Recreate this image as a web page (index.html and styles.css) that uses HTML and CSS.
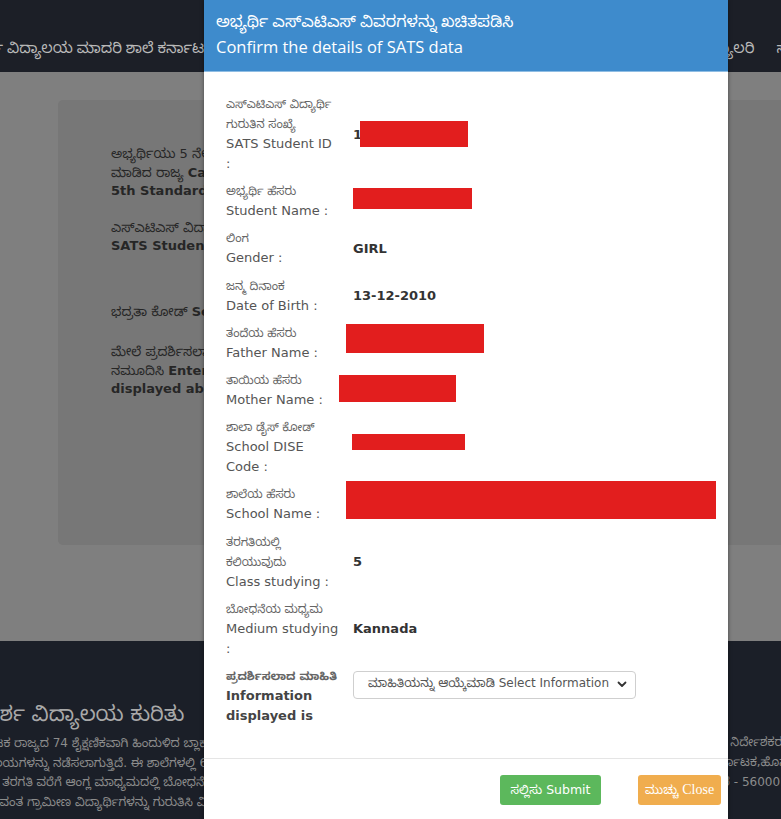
FILE: index.html
```html
<!DOCTYPE html>
<html lang="kn">
<head>
<meta charset="utf-8">
<title>SATS</title>
<link rel="stylesheet" href="styles.css">
</head>
<body>
<div class="page">
  <header class="nav">
    <div class="brand">ಆದರ್ಶ ವಿದ್ಯಾಲಯ ಮಾದರಿ ಶಾಲೆ ಕರ್ನಾಟಕ</div>
    <nav class="links">
      <span>ಮುಖಪುಟ</span>
      <span>ಗ್ಯಾಲರಿ</span>
      <span>ಸಂಪರ್ಕಿಸಿ</span>
    </nav>
  </header>
  <main class="main">
    <section class="card">
      <p class="cp">ಅಭ್ಯರ್ಥಿಯು 5 ನೇ ತರಗತಿಯಲ್ಲಿ ವ್ಯಾಸಂಗ ಮಾಡುತ್ತಿರುವ<br>ಮಾಡಿದ ರಾಜ್ಯ <b>Candidate studying state</b><br><b>5th Standard</b></p>
      <p class="cp">ಎಸ್‌ಎಟಿಎಸ್ ವಿದ್ಯಾರ್ಥಿ ಗುರುತಿನ ಸಂಖ್ಯೆ<br><b>SATS Student ID</b></p>
      <p class="cp cp-gap">ಭದ್ರತಾ ಕೋಡ್ <b>Security Code</b></p>
      <p class="cp">ಮೇಲೆ ಪ್ರದರ್ಶಿಸಲಾದ ಕೋಡ್ ಅನ್ನು<br>ನಮೂದಿಸಿ <b>Enter the code</b><br><b>displayed above</b></p>
    </section>
  </main>
  <footer class="foot">
    <div class="fcol">
      <h3 class="fhead">ಆದರ್ಶ ವಿದ್ಯಾಲಯ ಕುರಿತು</h3>
      <p class="ftext">ಕರ್ನಾಟಕ ರಾಜ್ಯದ 74 ಶೈಕ್ಷಣಿಕವಾಗಿ ಹಿಂದುಳಿದ ಬ್ಲಾಕ್‌ಗಳಲ್ಲಿ ಆದರ್ಶ<br>ವಿದ್ಯಾಲಯಗಳನ್ನು ನಡೆಸಲಾಗುತ್ತಿದೆ. ಈ ಶಾಲೆಗಳಲ್ಲಿ 6 ನೇ ತರಗತಿಯಿಂದ<br>10 ನೇ ತರಗತಿ ವರೆಗೆ ಆಂಗ್ಲ ಮಾಧ್ಯಮದಲ್ಲಿ ಬೋಧನೆ ನಡೆಯುತ್ತದೆ<br>ಪ್ರತಿಭಾವಂತ ಗ್ರಾಮೀಣ ವಿದ್ಯಾರ್ಥಿಗಳನ್ನು ಗುರುತಿಸಿ ವಿದ್ಯಾರ್ಥಿಗಳ ಸಮಗ್ರ</p>
    </div>
    <div class="fcol fcol-r">
      <p class="ftext">ರಾಜ್ಯ ಯೋಜನಾ ನಿರ್ದೇಶಕರು<br>ಸಮಗ್ರ ಶಿಕ್ಷಣ ಕರ್ನಾಟಕ,ಹೊಸ ಕಟ್ಟಡ<br>ಬೆಂಗಳೂರು ನಗರ - 560001</p>
    </div>
  </footer>
</div>

<div class="modal">
  <div class="mhead">
    <div class="mtitle kt">ಅಭ್ಯರ್ಥಿ ಎಸ್‌ಎಟಿಎಸ್ ವಿವರಗಳನ್ನು ಖಚಿತಪಡಿಸಿ</div>
    <div class="mtitle">Confirm the details of SATS data</div>
  </div>
  <div class="mbody">
    <div class="lbl"><span class="ln kn">ಎಸ್‌ಎಟಿಎಸ್ ವಿದ್ಯಾರ್ಥಿ</span><span class="ln kn">ಗುರುತಿನ ಸಂಖ್ಯೆ</span><span class="ln">SATS Student ID</span><span class="ln">:</span></div>
    <div class="val">1<span class="red r1"></span></div>

    <div class="lbl"><span class="ln kn">ಅಭ್ಯರ್ಥಿ ಹೆಸರು</span><span class="ln">Student Name :</span></div>
    <div class="val"><span class="red r2"></span></div>

    <div class="lbl"><span class="ln kn">ಲಿಂಗ</span><span class="ln">Gender :</span></div>
    <div class="val">GIRL</div>

    <div class="lbl"><span class="ln kn">ಜನ್ಮ ದಿನಾಂಕ</span><span class="ln">Date of Birth :</span></div>
    <div class="val">13-12-2010</div>

    <div class="lbl"><span class="ln kn">ತಂದೆಯ ಹೆಸರು</span><span class="ln">Father Name :</span></div>
    <div class="val"><span class="red r5"></span></div>

    <div class="lbl"><span class="ln kn">ತಾಯಿಯ ಹೆಸರು</span><span class="ln">Mother Name :</span></div>
    <div class="val"><span class="red r6"></span></div>

    <div class="lbl"><span class="ln kn">ಶಾಲಾ ಡೈಸ್ ಕೋಡ್</span><span class="ln">School DISE</span><span class="ln">Code :</span></div>
    <div class="val"><span class="red r7"></span></div>

    <div class="lbl"><span class="ln kn">ಶಾಲೆಯ ಹೆಸರು</span><span class="ln">School Name :</span></div>
    <div class="val"><span class="red r8"></span></div>

    <div class="lbl"><span class="ln kn">ತರಗತಿಯಲ್ಲಿ</span><span class="ln kn">ಕಲಿಯುವುದು</span><span class="ln">Class studying :</span></div>
    <div class="val">5</div>

    <div class="lbl"><span class="ln kn">ಬೋಧನೆಯ ಮಧ್ಯಮ</span><span class="ln">Medium studying</span><span class="ln">:</span></div>
    <div class="val">Kannada</div>

    <div class="lbl strong"><span class="ln kn">ಪ್ರದರ್ಶಿಸಲಾದ ಮಾಹಿತಿ</span><span class="ln">Information</span><span class="ln">displayed is</span></div>
    <div class="val val-top">
      <div class="select">
        <span>ಮಾಹಿತಿಯನ್ನು ಆಯ್ಕೆಮಾಡಿ Select Information</span>
        <svg class="chev" width="10" height="7" viewBox="0 0 10 7"><path d="M1.5 1.5 L5 5 L8.5 1.5" fill="none" stroke="#333" stroke-width="1.8" stroke-linecap="round" stroke-linejoin="round"/></svg>
      </div>
    </div>
  </div>
  <div class="mfoot">
    <button class="btn btn-ok"><span class="bk">ಸಲ್ಲಿಸು</span> Submit</button>
    <button class="btn btn-close"><span class="bk">ಮುಚ್ಚು</span> Close</button>
  </div>
</div>
</body>
</html>
```

FILE: styles.css
```css
html, body {
  margin: 0;
  padding: 0;
}
body {
  width: 781px;
  height: 819px;
  overflow: hidden;
  position: relative;
  font-family: "DejaVu Sans", "Noto Sans Kannada", "Lohit Kannada", sans-serif;
  background: #7f7f7f;
}
.page {
  display: flex;
  flex-direction: column;
  height: 819px;
}
.nav {
  height: 72px;
  flex: none;
  background: #1c1f27;
  display: flex;
  align-items: center;
  justify-content: space-between;
  overflow: hidden;
  color: #b8b8b8;
  font-family: "Noto Sans", "Noto Sans Kannada", sans-serif;
  font-size: 15px;
  white-space: nowrap;
}
.brand {
  margin-left: -39px;
  padding-top: 26px;
}
.links {
  display: flex;
  gap: 22px;
  margin-right: -54px;
  padding-top: 26px;
}
.main {
  flex: 1;
  padding-top: 28px;
  padding-left: 58px;
  overflow: hidden;
}
.card {
  background: #777777;
  border-radius: 5px;
  height: 445px;
  width: 800px;
  padding: 45px 0 0 53px;
  box-sizing: border-box;
  color: #262626;
  font-size: 13px;
  line-height: 18.5px;
  white-space: nowrap;
}
.cp {
  margin: 0 0 18px;
}
.cp-gap {
  margin-top: 47px;
  margin-bottom: 22px;
}
.foot {
  height: 178px;
  flex: none;
  background: #1b1f28;
  display: flex;
  justify-content: space-between;
  overflow: hidden;
  white-space: nowrap;
}
.fcol {
  margin-left: -34px;
  padding-top: 58px;
}
.fcol-r {
  margin-left: 0;
  margin-right: -38px;
  padding-top: 91px;
}
.fhead {
  margin: 0 0 5px;
  font-weight: normal;
  font-size: 21px;
  color: #a9a9a9;
  line-height: 30px;
}
.ftext {
  margin: 0;
  font-size: 12px;
  line-height: 19.5px;
  color: #8c8c8c;
}
.fcol-r .ftext {
  line-height: 20px;
}

/* modal */
.modal {
  position: absolute;
  left: 204px;
  top: 0;
  width: 524px;
  height: 840px;
  background: #fff;
  box-shadow: 0 0 4px rgba(0,0,0,0.45);
}
.mhead {
  background: #3e8bcc;
  height: 72px;
  box-sizing: border-box;
  padding: 9px 12px 0;
  border-bottom: 1px solid #8fbde3;
  color: #fff;
  font-family: "Open Sans", "Noto Sans Kannada", sans-serif;
  font-size: 16.5px;
  line-height: 25px;
}
.kt {
  font-size: 16px;
}
.mbody {
  display: grid;
  grid-template-columns: 127px 1fr;
  row-gap: 7.2px;
  padding: 22px 12px 32px 22px;
  border-bottom: 1px solid #e5e5e5;
}
.lbl {
  font-size: 13px;
  color: #555;
  white-space: nowrap;
}
.ln {
  display: block;
  height: 20px;
  line-height: 20px;
  overflow: visible;
}
.kn {
  font-size: 11.5px;
  color: #666;
}
.strong {
  font-weight: bold;
  color: #444;
}
.val {
  display: flex;
  align-items: center;
  font-size: 13px;
  font-weight: bold;
  color: #333;
}
.val-top {
  align-items: flex-start;
  font-weight: normal;
}
.red {
  display: inline-block;
  background: #e21e1e;
}
.r1 { width: 108px; height: 26px; margin-left: -2px; }
.r2 { width: 119px; height: 21px; margin-top: -6px; }
.r5 { width: 138px; height: 29px; margin-left: -7px; margin-top: -8px; }
.r6 { width: 117px; height: 27px; margin-left: -14px; margin-top: -3px; }
.r7 { width: 113px; height: 16px; margin-left: -1px; margin-top: -10px; }
.r8 { width: 370px; height: 38px; margin-left: -7px; margin-top: -9px; }
.select {
  width: 283px;
  height: 28px;
  box-sizing: border-box;
  border: 1px solid #cfcfcf;
  border-radius: 4px;
  display: flex;
  align-items: center;
  justify-content: space-between;
  padding: 0 8px 0 14px;
  font-size: 12px;
  color: #555;
  margin-top: 5px;
  white-space: nowrap;
}
.chev {
  flex: none;
}
.mfoot {
  display: flex;
  justify-content: flex-end;
  gap: 37px;
  padding: 16px 7px 0 0;
}
.btn {
  height: 30px;
  border: none;
  border-radius: 3px;
  color: #fff;
  font-size: 12.5px;
  padding: 0;
  white-space: nowrap;
  line-height: 30px;
  font-family: "DejaVu Sans", "Noto Sans Kannada", sans-serif;
}
.bk {
  font-family: "Noto Sans Kannada", "Lohit Kannada", sans-serif;
  font-size: 12px;
}
.btn-ok {
  background: #5cb85c;
  width: 101px;
}
.btn-close {
  background: #f0ad4e;
  width: 83px;
  font-family: "Liberation Serif", serif;
  font-size: 14px;
}
```
